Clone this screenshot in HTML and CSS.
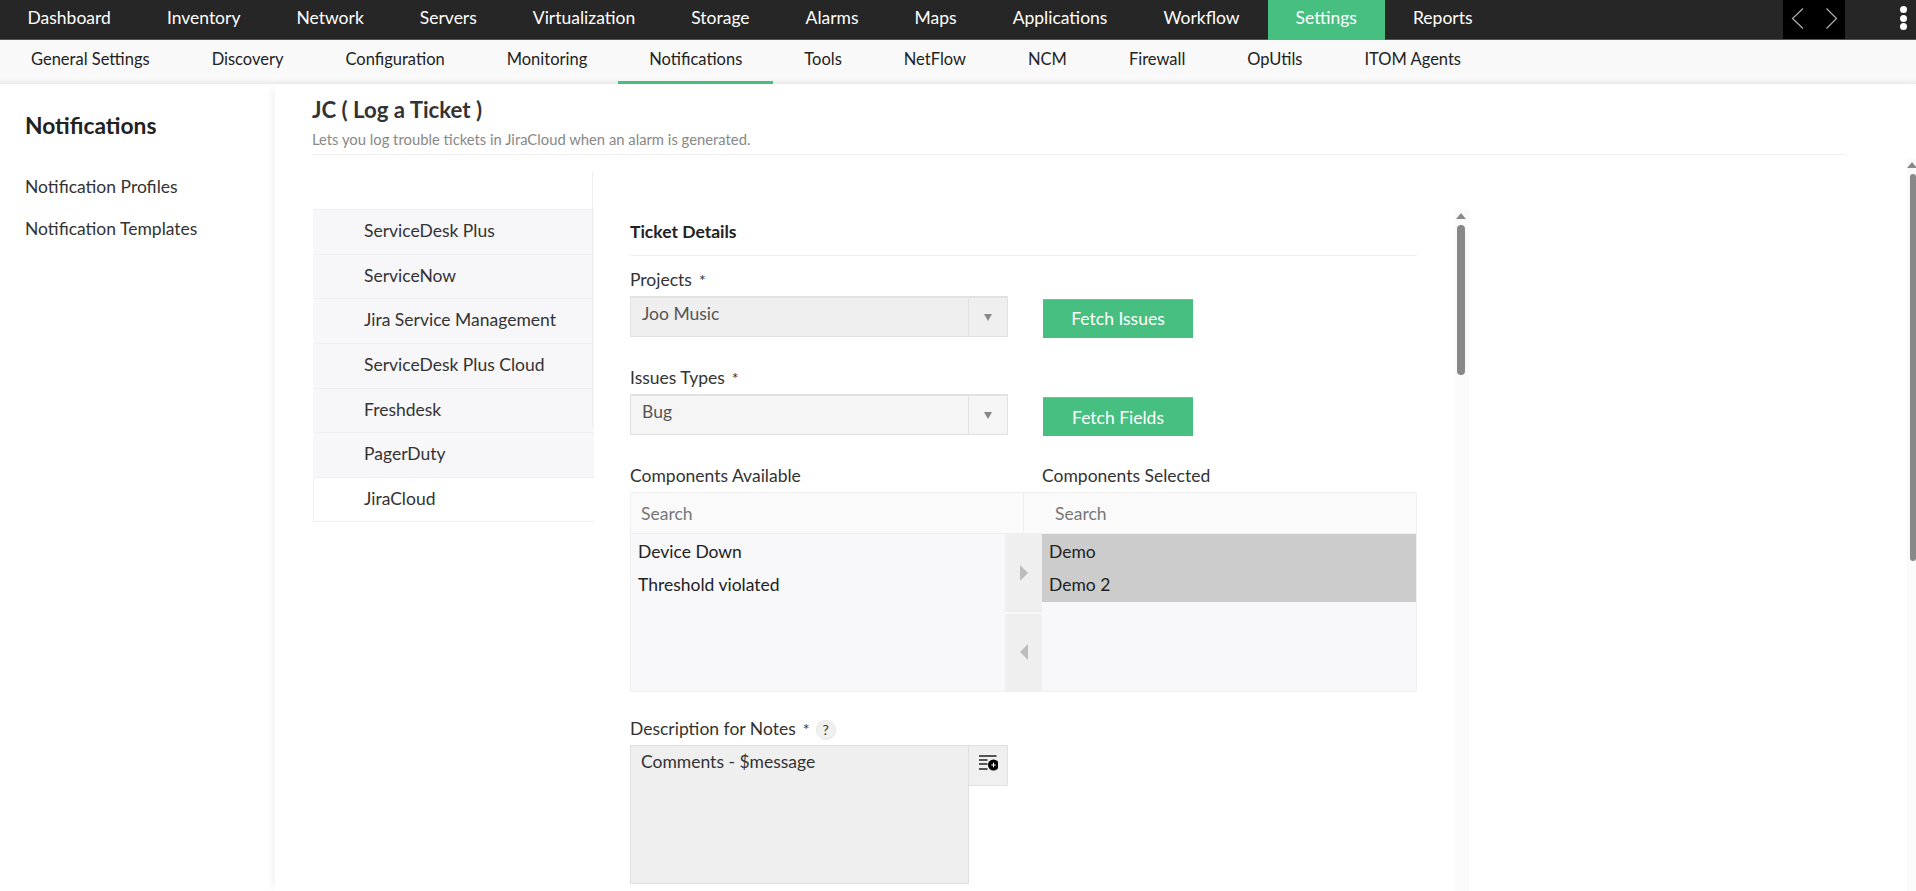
FILE: index.html
```html
<!DOCTYPE html>
<html lang="en">
<head>
<meta charset="utf-8">
<title>JC ( Log a Ticket )</title>
<link rel="stylesheet" href="styles.css">
</head>
<body>
<header class="topbar">
  <nav class="topnav">
    <a>Dashboard</a><a>Inventory</a><a>Network</a><a>Servers</a><a>Virtualization</a><a>Storage</a><a>Alarms</a><a>Maps</a><a>Applications</a><a>Workflow</a><a class="on">Settings</a><a>Reports</a>
  </nav>
  <div class="pager">
    <svg width="62" height="39" viewBox="0 0 62 39"><path d="M20 8.500 9.500 18.500 20 28.500M43.500 8.500 53.500 18.500 43.500 28.500" fill="none" stroke="#b0b0b0" stroke-width="1.200"/></svg>
  </div>
  <div class="dots"><i></i><i></i><i></i></div>
</header>
<nav class="subnav">
  <a>General Settings</a><a>Discovery</a><a>Configuration</a><a>Monitoring</a><a class="on">Notifications</a><a>Tools</a><a>NetFlow</a><a>NCM</a><a>Firewall</a><a>OpUtils</a><a>ITOM Agents</a>
</nav>
<div class="layout">
  <aside class="side">
    <h2>Notifications</h2>
    <a>Notification Profiles</a>
    <a>Notification Templates</a>
  </aside>
  <main class="main">
    <div class="head">
      <h1>JC ( Log a Ticket )</h1>
      <p>Lets you log trouble tickets in JiraCloud when an alarm is generated.</p>
    </div>
    <div class="body">
      <div class="tabs">
        <a>ServiceDesk Plus</a><a>ServiceNow</a><a>Jira Service Management</a><a>ServiceDesk Plus Cloud</a><a>Freshdesk</a><a class="tall">PagerDuty</a><a class="on">JiraCloud</a>
      </div>
      <form class="form">
        <h3>Ticket Details</h3>
        <label class="first">Projects<span class="star">*</span></label>
        <div class="row">
          <div class="select dark"><span>Joo Music</span><b class="caret"></b></div>
          <button type="button" class="btn up">Fetch Issues</button>
        </div>
        <label>Issues Types<span class="star">*</span></label>
        <div class="row">
          <div class="select"><span>Bug</span><b class="caret"></b></div>
          <button type="button" class="btn">Fetch Fields</button>
        </div>
        <div class="complabels"><label>Components Available</label><label>Components Selected</label></div>
        <div class="dual">
          <div class="searches"><span>Search</span><span>Search</span></div>
          <div class="lists">
            <ul class="avail"><li>Device Down</li><li>Threshold violated</li></ul>
            <div class="moves">
              <div class="move"><b class="arrow right"></b></div>
              <div class="move"><b class="arrow left"></b></div>
            </div>
            <ul class="chosen"><li>Demo</li><li>Demo 2</li></ul>
          </div>
        </div>
        <label class="desc">Description for Notes<span class="star">*</span><span class="help">?</span></label>
        <div class="notes">
          <div class="area">Comments - $message</div>
          <div class="vars">
            <svg width="20" height="18" viewBox="0 0 20 18"><path d="M1 2h17.500M1 6h8.500M1 10h8.500M1 15h8.500" stroke="#222" stroke-width="1.700" fill="none"/><circle cx="15.500" cy="11" r="5.500" fill="#000"/><path d="M13.300 11h4.400M15.500 8.800v4.400" stroke="#fff" stroke-width="1.100"/></svg>
          </div>
        </div>
      </form>
      <div class="vbar inner"><b></b><i></i></div>
    </div>
    <div class="vbar outer"><b></b><i></i></div>
  </main>
</div>
</body>
</html>
```
FILE: styles.css
```css
* { box-sizing: border-box; }
html, body { height: 100%; margin: 0; }
body {
  display: flex;
  flex-direction: column;
  height: 891px;
  overflow: hidden;
  background: #fff;
  color: #222;
  font-family: Lato, "Liberation Sans", sans-serif;
  font-size: 17.500px;
}
.topbar {
  display: flex;
  flex: none;
  height: 40px;
  background: #262626;
  border-bottom: 1px solid #555;
}
.topnav { display: flex; flex: 1; }
.topnav a {
  padding: 0 28px;
  color: #fff;
  font-size: 17.500px;
  line-height: 36px;
}
.topnav a:first-child { padding-left: 27.500px; }
.topnav a.on { background: #47bf80; height: 40px; }
.pager { width: 62px; height: 39px; background: #000; }
.pager svg { display: block; }
.dots {
  display: flex;
  flex-direction: column;
  align-items: center;
  gap: 1.500px;
  width: 71px;
  padding: 6px 0 0 45px;
}
.dots i { width: 7px; height: 7px; border-radius: 50%; background: #fff; }
.subnav {
  display: flex;
  flex: none;
  height: 44px;
  background: #f9f9f9;
  box-shadow: inset 0 -6px 5px -4px rgba(0, 0, 0, .07);
}
.subnav a {
  height: 44px;
  padding: 0 31px;
  color: #222;
  font-size: 16.500px;
  line-height: 39px;
}
.subnav a.on { border-bottom: 3px solid #47bf80; }
.layout { display: flex; flex: 1; min-height: 0; }
.side { flex: none; width: 275px; padding: 27px 0 0 25px; }
.side h2 { margin: 0 0 37px; font-size: 22.800px; font-weight: 700; line-height: 28px; color: #222; }
.side a { display: block; height: 42px; line-height: 22px; color: #333; }
.main {
  position: relative;
  flex: 1;
  min-width: 0;
  padding: 0 71px 0 37px;
  background: #fff;
  box-shadow: -6px 0 8px -3px rgba(0, 0, 0, .05);
}
.head { height: 71px; border-bottom: 1px solid #efefef; }
.head h1 { margin: 0; padding-top: 11px; font-size: 22.200px; font-weight: 700; line-height: 30px; color: #333; }
.head p { margin: 4px 0 0; font-size: 14.800px; line-height: 20px; color: #888; }
.body { position: relative; display: flex; height: 736px; }
.tabs { flex: none; width: 281px; margin: 54px 0 0 1px; }
.tabs::before {
  content: "";
  position: absolute;
  left: 280px;
  top: 17px;
  width: 1px;
  height: 255px;
  background: #eee;
}
.tabs a {
  display: block;
  height: 44.700px;
  padding-left: 51px;
  background: #f7f7f9;
  border-top: 1px solid #efefef;
  line-height: 41px;
  color: #333;
}
.tabs a.on { background: #fff; border-bottom: 1px solid #efefef; border-left: 1px solid #efefef; padding-left: 50px; height: 45px; }
.form { flex: none; width: 787px; margin: 53px 0 0 36px; }
.form h3 { margin: 0; height: 48px; border-bottom: 1px solid #efefef; font-size: 17.500px; font-weight: 700; line-height: 48px; color: #222; }
.form label { display: block; height: 20px; margin: 30px 0 7px; line-height: 21px; color: #333; }
.form label.first { margin-top: 13px; line-height: 22px; }
.star { margin-left: 7px; font-size: 16px; color: #333; }
.row { display: flex; height: 41px; }
.select {
  position: relative;
  flex: none;
  width: 378px;
  height: 41px;
  padding: 6px 0 0 11px;
  background: #f5f5f5;
  border: 1px solid #e2e2e2;
  border-width: 2px 1px 1px;
  color: #555;
  line-height: 20px;
}
.select.dark { background: #efefef; }
.caret {
  position: absolute;
  right: 0;
  top: 0;
  bottom: 0;
  width: 39px;
  border-left: 1px solid #e2e2e2;
}
.caret::after {
  content: "";
  position: absolute;
  left: 15px;
  top: 16px;
  border: 4.500px solid transparent;
  border-top: 7px solid #888;
  border-bottom: 0;
}
.btn {
  width: 150px;
  height: 39px;
  margin: 3px 0 0 35px;
  padding: 0;
  background: #47bf80;
  border: 0;
  border-top: 1px solid #60c994;
  color: #fff;
  font: 17.500px/37px Lato, "Liberation Sans", sans-serif;
}
.btn.up { padding-bottom: 2px; }
.complabels { display: grid; grid-template-columns: 412px 1fr; }
.dual { height: 200px; border: 1px solid #f0f0f0; }
.searches { display: grid; grid-template-columns: 392px 1fr; height: 41px; border-bottom: 1px solid #efefef; background: #fafafa; }
.searches span { padding-left: 10px; line-height: 41px; color: #777; }
.searches span + span { padding-left: 31px; border-left: 1px solid #efefef; }
.lists { display: flex; height: 157px; background: #f8f8fa; }
.lists ul { margin: 0; padding: 0; list-style: none; }
.avail { flex: none; width: 374px; }
.lists li { height: 33px; padding-left: 7px; color: #222; line-height: 35px; }
.moves { display: flex; flex: none; flex-direction: column; gap: 2px; width: 37px; }
.move { display: flex; flex: 1; align-items: center; justify-content: center; background: #efefef; }
.arrow { border: 8px solid transparent; }
.arrow.right { border-left: 8px solid #bdbdbd; border-right: 0; }
.arrow.left { border-right: 8px solid #bdbdbd; border-left: 0; }
.chosen { flex: 1; }
.chosen li { background: #ccc; }
.chosen li:last-child { height: 35px; }
.form label.desc { display: flex; align-items: center; margin: 26px 0 7px; }
.help {
  width: 20px;
  height: 20px;
  margin: 4px 0 0 6px;
  background: #f0f0f0;
  border: 1px solid #e8e8e8;
  border-radius: 50%;
  font-size: 14px;
  line-height: 18px;
  text-align: center;
}
.notes { display: flex; align-items: flex-start; }
.area {
  flex: none;
  width: 339px;
  height: 139px;
  padding: 6px 0 0 10px;
  background: #efefef;
  border: 1px solid #e0e0e0;
  color: #333;
  line-height: 20px;
}
.vars {
  flex: none;
  width: 39px;
  height: 41px;
  padding: 8px 0 0 9px;
  background: #f0f0f0;
  border: 1px solid #e2e2e2;
  border-left: 0;
}
.vars svg { display: block; }
.vbar { position: absolute; background: #fafafa; }
.vbar b {
  position: absolute;
  left: 0;
  border: 5px solid transparent;
  border-top: 0;
  border-bottom: 6px solid #8a8a8a;
}
.vbar i { position: absolute; display: block; background: #888; border-radius: 4px; }
.vbar.inner { left: 1143px; top: 54px; width: 14px; bottom: 0; }
.inner b { top: 4px; left: 1px; }
.inner i { top: 16px; left: 2px; width: 8px; height: 150px; }
.vbar.outer { right: 0; top: 75px; width: 9px; bottom: 0; }
.outer b { top: 3px; left: 0; }
.outer i { top: 15px; left: 3px; width: 6px; height: 387px; }
```
